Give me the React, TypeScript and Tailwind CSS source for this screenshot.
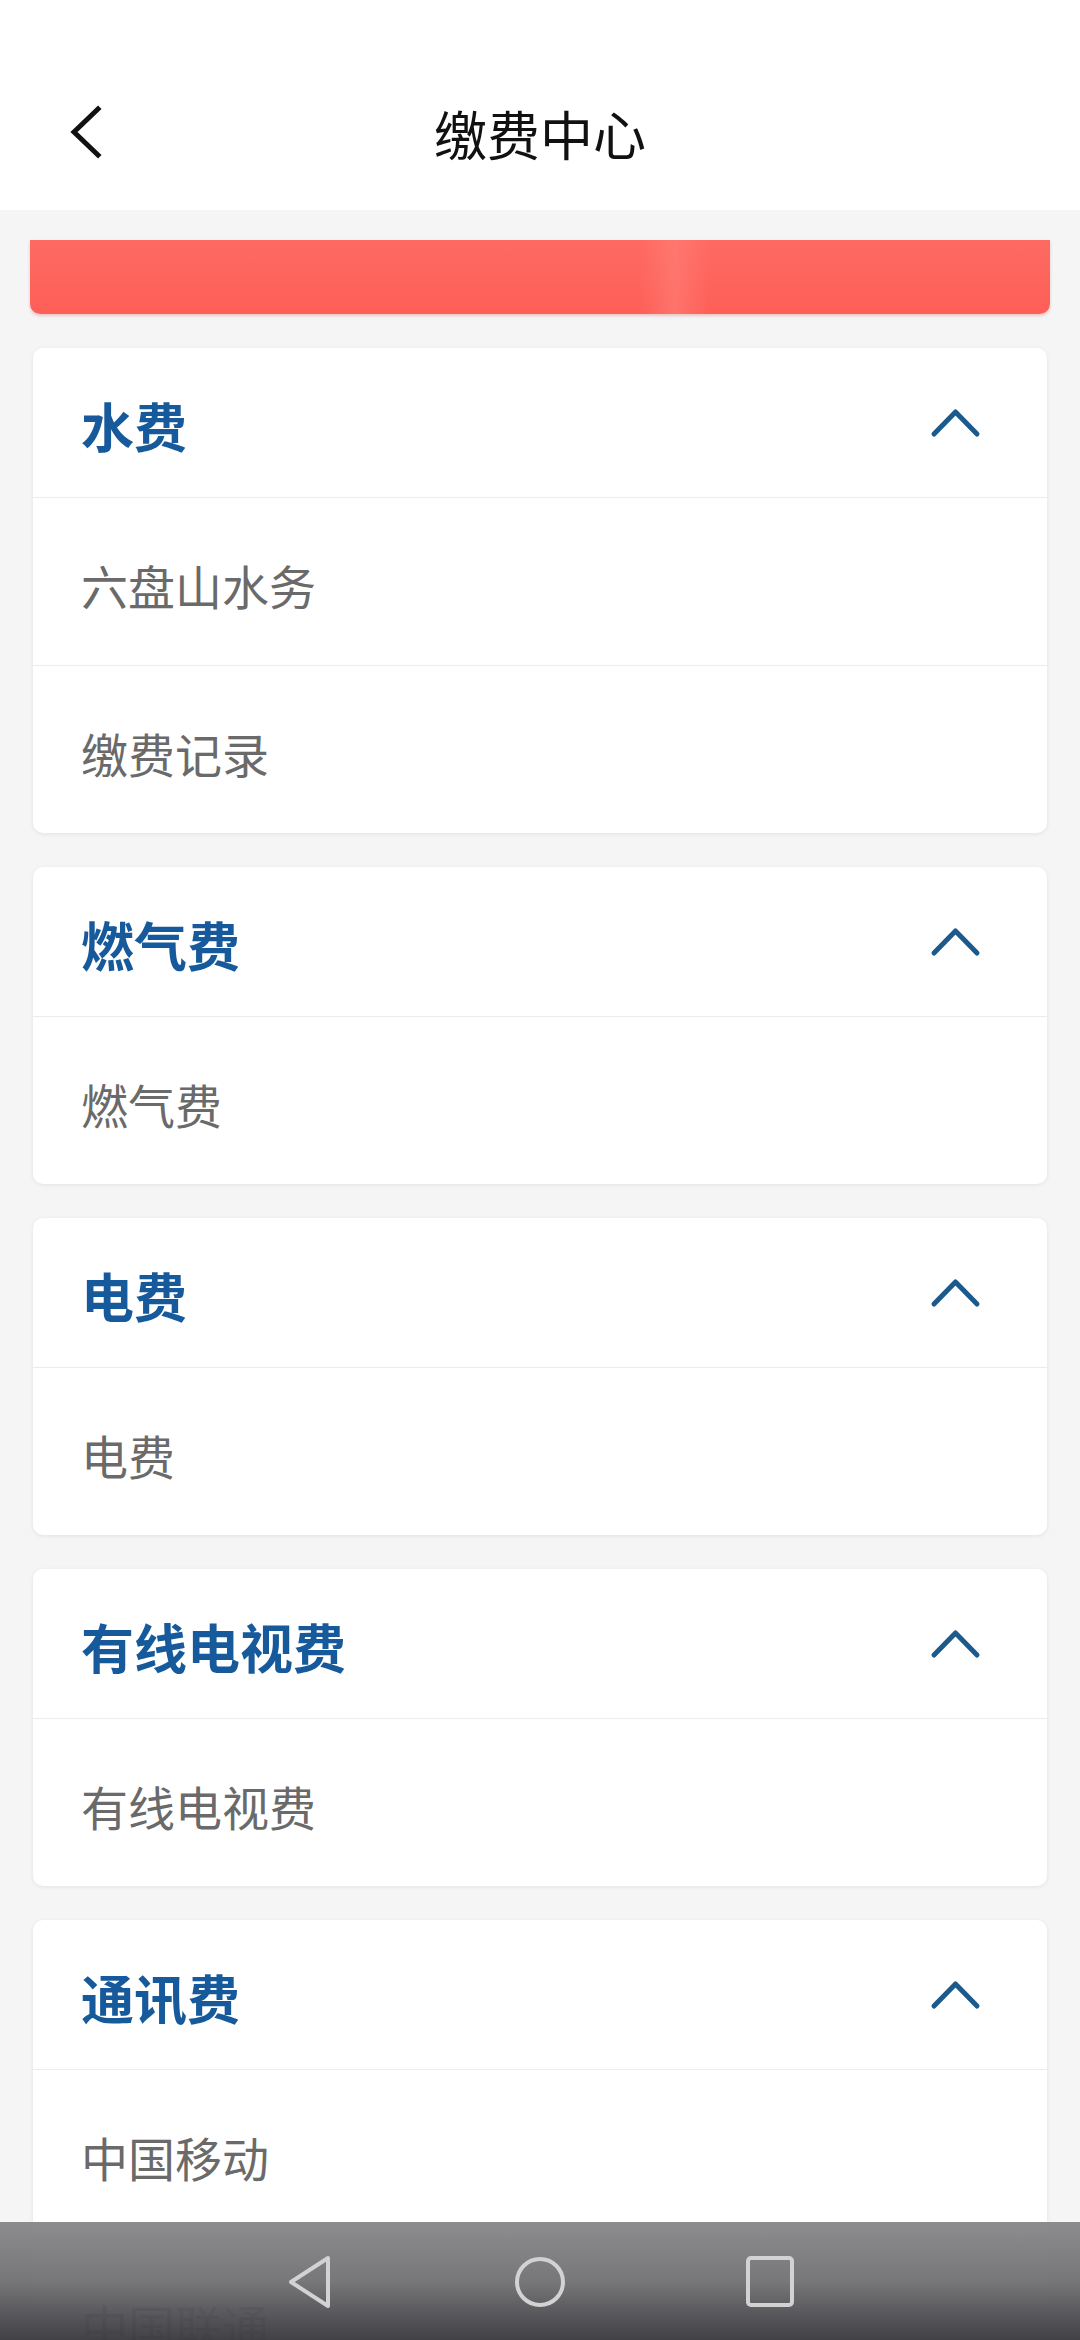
const FONT = "font-['Noto_Sans_CJK_SC','Noto_Sans',sans-serif]";

const SECTIONS: { title: string; items: string[] }[] = [
  { title: '水费', items: ['六盘山水务', '缴费记录'] },
  { title: '燃气费', items: ['燃气费'] },
  { title: '电费', items: ['电费'] },
  { title: '有线电视费', items: ['有线电视费'] },
  { title: '通讯费', items: ['中国移动', '中国联通'] },
];

function BackIcon() {
  return (
    <svg width="40" height="60" viewBox="0 0 40 60" fill="none">
      <path d="M34 8 L10 31 L34 54" stroke="#111" strokeWidth="5" strokeLinecap="square" />
    </svg>
  );
}

function ChevronUp() {
  return (
    <svg width="51" height="30" viewBox="0 0 51 30" fill="none">
      <path d="M4 26 L25.5 4 L47 26" stroke="#1d5a8c" strokeWidth="5" strokeLinecap="round" strokeLinejoin="round" />
    </svg>
  );
}

function Section({ title, items }: { title: string; items: string[] }) {
  return (
    <div className="bg-white rounded-[10px] shadow-[0_1px_4px_rgba(0,0,0,0.08)] overflow-hidden">
      <div className="h-[149px] flex items-center justify-between pl-[48px] pr-[66px]">
        <span className="text-[53px] leading-none font-bold text-[#175a9b] pt-[6px]">{title}</span>
        <ChevronUp />
      </div>
      {items.map((item) => (
        <div key={item} className="h-[168px] border-t border-[#ececec] flex items-center pl-[48px]">
          <span className="text-[47px] leading-none text-[#6a6a6a] pt-[6px]">{item}</span>
        </div>
      ))}
    </div>
  );
}

export default function App() {
  return (
    <div className={`relative w-[1080px] h-[2340px] overflow-hidden bg-[#f5f5f5] ${FONT}`}>
      {/* top bar */}
      <header className="h-[210px] bg-white pt-[60px]">
        <div className="relative h-[146px] flex items-center justify-center">
          <div className="absolute left-[64px] top-[41px]">
            <BackIcon />
          </div>
          <h1 className="text-[53px] leading-none font-normal text-[#111]">缴费中心</h1>
        </div>
      </header>

      <div className="px-[30px] pt-[30px]">
        <div className="relative h-[74px] rounded-b-[10px] bg-gradient-to-b from-[#fe6a62] to-[#fd5f57] shadow-[0_2px_3px_rgba(200,60,60,0.25)] overflow-hidden">
          <div className="absolute left-[610px] top-0 h-full w-[70px] bg-gradient-to-r from-transparent via-[#ff8078] to-transparent opacity-60" />
        </div>
      </div>

      <main className="px-[33px] pt-[34px] flex flex-col gap-[34px]">
        {SECTIONS.map((s) => (
          <Section key={s.title} {...s} />
        ))}
      </main>

      {/* system navigation bar */}
      <nav className="absolute left-0 right-0 bottom-0 h-[118px] bg-gradient-to-b from-[rgba(132,132,134,0.93)] via-[rgba(112,112,114,0.95)] to-[rgba(62,61,66,0.98)]">
        <div className="flex justify-center pt-[33px]">
          <div className="w-[230px] flex justify-center">
            <svg width="46" height="54" viewBox="0 0 46 54" fill="none">
              <path d="M41 3 L4 27 L41 51 Z" stroke="#d2d2d2" strokeWidth="4" strokeLinejoin="round" />
            </svg>
          </div>
          <div className="w-[230px] flex justify-center">
            <svg width="54" height="54" viewBox="0 0 54 54" fill="none">
              <circle cx="27" cy="27" r="23" stroke="#d2d2d2" strokeWidth="4" />
            </svg>
          </div>
          <div className="w-[230px] flex justify-center">
            <svg width="50" height="54" viewBox="0 0 50 54" fill="none">
              <rect x="3" y="3" width="44" height="47" rx="3" stroke="#d2d2d2" strokeWidth="4" />
            </svg>
          </div>
        </div>
      </nav>
    </div>
  );
}
